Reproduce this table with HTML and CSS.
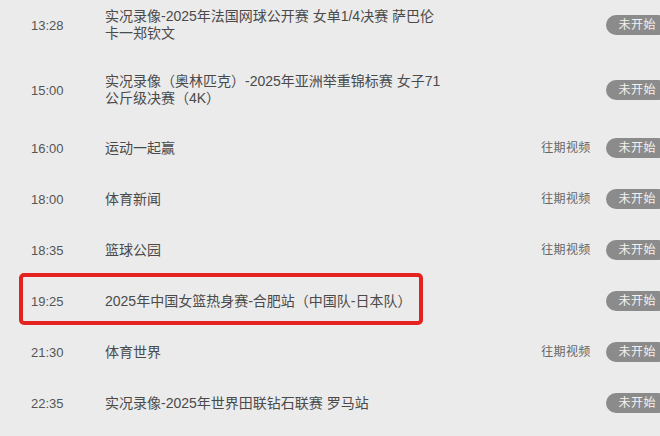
FILE: index.html
```html
<!DOCTYPE html>
<html lang="zh-CN">
<head>
<meta charset="utf-8">
<title>节目单</title>
<link rel="stylesheet" href="styles.css">
</head>
<body>
<ul class="schedule">
  <li class="row">
    <span class="time">13:28</span>
    <span class="title">实况录像-2025年法国网球公开赛 女单1/4决赛 萨巴伦卡一郑钦文</span>
    <span class="replay"></span>
    <span class="badge">未开始</span>
  </li>
  <li class="row">
    <span class="time">15:00</span>
    <span class="title">实况录像（奥林匹克）-2025年亚洲举重锦标赛 女子71公斤级决赛（4K）</span>
    <span class="replay"></span>
    <span class="badge">未开始</span>
  </li>
  <li class="row">
    <span class="time">16:00</span>
    <span class="title">运动一起赢</span>
    <span class="replay">往期视频</span>
    <span class="badge">未开始</span>
  </li>
  <li class="row">
    <span class="time">18:00</span>
    <span class="title">体育新闻</span>
    <span class="replay">往期视频</span>
    <span class="badge">未开始</span>
  </li>
  <li class="row">
    <span class="time">18:35</span>
    <span class="title">篮球公园</span>
    <span class="replay">往期视频</span>
    <span class="badge">未开始</span>
  </li>
  <li class="row row-marked">
    <span class="time">19:25</span>
    <span class="title">2025年中国女篮热身赛-合肥站（中国队-日本队）</span>
    <span class="replay"></span>
    <span class="badge">未开始</span>
  </li>
  <li class="row">
    <span class="time">21:30</span>
    <span class="title">体育世界</span>
    <span class="replay">往期视频</span>
    <span class="badge">未开始</span>
  </li>
  <li class="row">
    <span class="time">22:35</span>
    <span class="title">实况录像-2025年世界田联钻石联赛 罗马站</span>
    <span class="replay"></span>
    <span class="badge">未开始</span>
  </li>
</ul>
</body>
</html>
```

FILE: styles.css
```css
html, body {
  margin: 0;
  padding: 0;
  background: #ebebeb;
  overflow: hidden;
}

body {
  font-family: "Liberation Sans", "Noto Sans CJK SC", sans-serif;
  color: #505050;
}

.schedule {
  list-style: none;
  margin: -7.5px 0 0 0;
  padding: 0 0 0 31px;
  width: 637px;
}

.row {
  position: relative;
  display: grid;
  grid-template-columns: 74px 340px 1fr auto;
  align-items: center;
  padding: 15.5px 0;
}

.time {
  font-size: 13px;
  line-height: 17px;
  color: #555;
}

.title {
  font-size: 14px;
  line-height: 17px;
  color: #4a4a4a;
}

.replay {
  justify-self: end;
  font-size: 12px;
  line-height: 17px;
  color: #666;
  margin-right: 16px;
  letter-spacing: 0.3px;
}

.badge {
  height: 20px;
  line-height: 20px;
  padding: 0 12px;
  border-radius: 10px;
  background: #8b8b8b;
  color: #f2f2f2;
  font-size: 12px;
  letter-spacing: 0.5px;
}

.row-marked::after {
  content: "";
  position: absolute;
  left: -12px;
  top: -2.5px;
  width: 396px;
  height: 44px;
  border: 4px solid #e42320;
  border-radius: 5px;
}
```
